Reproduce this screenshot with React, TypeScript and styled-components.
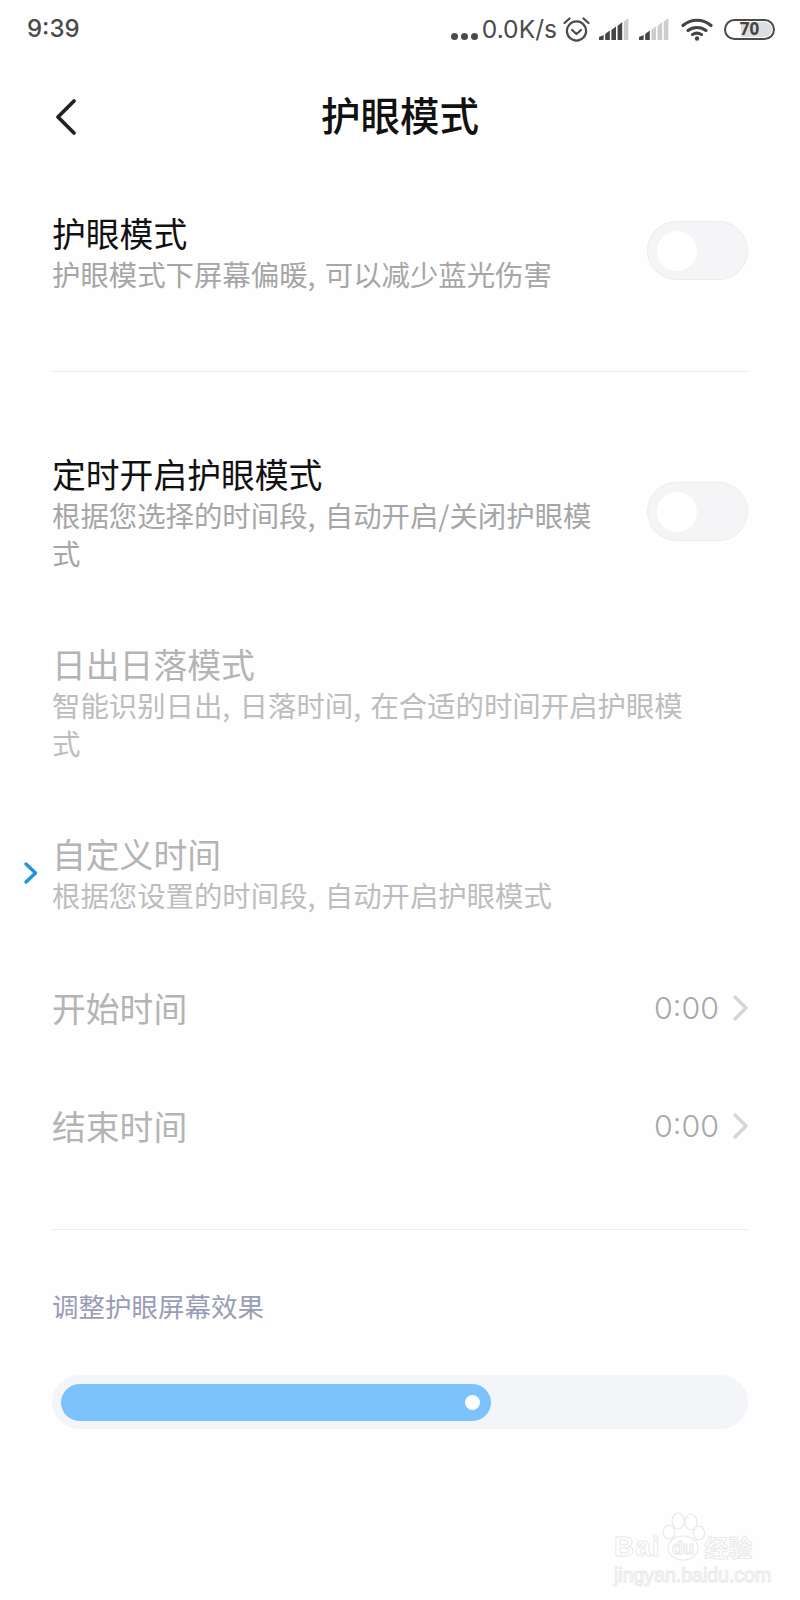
import React from "react";
import styled, { createGlobalStyle } from "styled-components";

const Global = createGlobalStyle`
  html, body { margin: 0; padding: 0; background: #fff; }
  body { font-family: "Noto Sans CJK SC", "Noto Sans", sans-serif; }
`;

const Page = styled.div`
  position: relative;
  width: 800px;
  height: 1600px;
  background: #fefefe;
  overflow: hidden;
`;

const StatusBar = styled.div`
  display: flex;
  align-items: center;
  height: 58px;
  padding: 0 25px 0 27px;
  color: #444;
`;

const Clock = styled.span`
  font: 500 24px/58px Inter, "Noto Sans", sans-serif;
  color: #4a4a4a;
  margin-right: auto;
`;

const Dots = styled.span`
  display: flex;
  gap: 3px;
  align-self: flex-end;
  margin: 0 4px 18px 0;
`;

const Dot = styled.i`
  width: 7px;
  height: 7px;
  border-radius: 50%;
  background: #4a4a4a;
`;

const Speed = styled.span`
  font: 400 24.6px/58px Inter, "Noto Sans", sans-serif;
  color: #4a4a4a;
  margin-right: 6px;
`;

const StatusIcon = styled.svg<{ $gap?: number }>`
  display: block;
  flex: none;
  margin-left: ${(p) => p.$gap ?? 0}px;
`;

const BatteryShell = styled.div`
  box-sizing: border-box;
  position: relative;
  width: 51px;
  height: 21px;
  margin-left: 11px;
  border: 2.5px solid #4a4a4a;
  border-radius: 11px;
  display: flex;
  align-items: center;
  justify-content: center;
  background: #fff;
`;

const BatteryFill = styled.div`
  position: absolute;
  right: 1px;
  top: 1px;
  bottom: 1px;
  width: 66%;
  border-radius: 0 8px 8px 0;
  background: #dedede;
`;

const BatteryLabel = styled.span`
  position: relative;
  font: 700 17px/16px "Noto Sans", sans-serif;
  color: #444;
`;

const NavBar = styled.div`
  position: relative;
  display: flex;
  align-items: center;
  justify-content: center;
  box-sizing: border-box;
  height: 118px;
  padding-bottom: 6px;
`;

const BackIcon = styled.svg`
  position: absolute;
  left: 54px;
  top: 40px;
`;

const NavTitle = styled.h1`
  margin: 0;
  font-size: 39.5px;
  line-height: 46px;
  font-weight: 500;
  color: #111;
`;

const Content = styled.main`
  padding: 0 52px 0 52px;
`;

const Row = styled.section<{ $top: number }>`
  display: flex;
  justify-content: space-between;
  align-items: flex-start;
  margin-top: ${(p) => p.$top}px;
`;

const RowText = styled.div<{ $width?: number }>`
  width: ${(p) => p.$width ?? 560}px;
`;

const RowTitle = styled.div<{ $muted?: boolean }>`
  font-size: 33.8px;
  line-height: 44px;
  color: ${(p) => (p.$muted ? "#b4b4b4" : "#111")};
`;

const RowDesc = styled.div<{ $muted?: boolean }>`
  font-size: 28.4px;
  word-spacing: 3px;
  line-height: 38px;
  color: ${(p) => (p.$muted ? "#bdbdbd" : "#a6a6a6")};
`;

const Toggle = styled.div<{ $offset: number }>`
  box-sizing: border-box;
  flex: none;
  width: 101px;
  height: 59px;
  margin-top: ${(p) => p.$offset}px;
  padding: 9px 0 0 9px;
  border: 1px solid #ececec;
  border-radius: 30px;
  background: #f5f4f6;
`;

const Knob = styled.div`
  width: 40px;
  height: 40px;
  border-radius: 50%;
  background: #fff;
`;

const Divider = styled.hr<{ $top: number }>`
  height: 1px;
  border: 0;
  margin: ${(p) => p.$top}px 0 0;
  background: #ececec;
`;

const SelectedMark = styled.svg`
  position: absolute;
  left: 23px;
  top: 861px;
`;

const TimeRow = styled.div<{ $top: number }>`
  display: flex;
  align-items: center;
  height: 44px;
  margin-top: ${(p) => p.$top}px;
`;

const TimeValue = styled.span`
  margin-left: auto;
  margin-right: 14px;
  font: 300 30.4px/44px Inter, "Noto Sans", sans-serif;
  color: #a8a8a8;
`;

const SectionLabel = styled.div`
  margin-top: 58px;
  font-size: 26.5px;
  line-height: 36px;
  color: #9a9db6;
`;

const SliderTrack = styled.div`
  box-sizing: border-box;
  height: 54px;
  margin-top: 51px;
  padding: 9px;
  border-radius: 27px;
  background: #f3f5f9;
`;

const SliderFill = styled.div<{ $width: number }>`
  position: relative;
  width: ${(p) => p.$width}px;
  height: 37px;
  border-radius: 19px;
  background: #7cc3fd;
`;

const SliderDot = styled.div`
  position: absolute;
  right: 11px;
  top: 11px;
  width: 15px;
  height: 15px;
  border-radius: 50%;
  background: #fff;
`;

const Watermark = styled.div`
  position: absolute;
  left: 614px;
  top: 1512px;
  width: 150px;
  color: #fff;
  -webkit-text-stroke: 1px #e9e9e9;
`;

const WatermarkTop = styled.div`
  display: flex;
  align-items: flex-end;
  height: 50px;
`;

const WatermarkBrand = styled.span`
  font: 700 28px/30px "Liberation Sans", sans-serif;
  letter-spacing: 1px;
`;

const WatermarkCn = styled.span`
  font-size: 24px;
  line-height: 30px;
  font-weight: 700;
`;

const WatermarkUrl = styled.div`
  font: 400 19.5px/24px "Liberation Sans", sans-serif;
  white-space: nowrap;
  margin-top: 1px;
`;

const Signal = ({ active, gap }: { active: number; gap: number }) => {
  const bars = [
    { x: 0, a: 19, b: 17 },
    { x: 6.2, a: 16, b: 12.5 },
    { x: 12.4, a: 12, b: 8.5 },
    { x: 18.6, a: 8, b: 4 },
    { x: 24.8, a: 3.5, b: 0 },
  ];
  return (
    <StatusIcon $gap={gap} width="30" height="22" viewBox="0 0 30 22">
      {bars.map((b, i) => (
        <polygon
          key={b.x}
          points={`${b.x},${b.a} ${b.x + 4.6},${b.b} ${b.x + 4.6},22 ${b.x},22`}
          fill={i < active ? "#444" : "#cdcdcd"}
        />
      ))}
    </StatusIcon>
  );
};

const Chevron = () => (
  <svg width="15" height="26" viewBox="0 0 15 26" fill="none">
    <path d="M2 2 L13 13 L2 24" stroke="#d6d6d6" strokeWidth="3.4" strokeLinecap="round" strokeLinejoin="round" />
  </svg>
);

export default function App() {
  return (
    <Page>
      <Global />
      <StatusBar>
        <Clock>9:39</Clock>
        <Dots>
          <Dot />
          <Dot />
          <Dot />
        </Dots>
        <Speed>0.0K/s</Speed>
        <StatusIcon width="27" height="27" viewBox="0 0 27 27" fill="none" stroke="#4a4a4a" strokeWidth="2.2" strokeLinecap="round" strokeLinejoin="round">
          <circle cx="13.5" cy="15" r="9.6" />
          <path d="M9 14 L13.5 18 L18 14" />
          <path d="M1.5 7 L6.5 2.5 M25.5 7 L20.5 2.5" />
        </StatusIcon>
        <Signal active={4} gap={9} />
        <Signal active={2} gap={10} />
        <StatusIcon $gap={12} width="32" height="23" viewBox="0 0 32 23" fill="none" stroke="#444" strokeWidth="3.2" strokeLinecap="round">
          <path d="M2 7.5 C10 0.5 22 0.5 30 7.5" />
          <path d="M7 12.5 C12 8.5 20 8.5 25 12.5" />
          <path d="M11.5 16.5 C14 15 18 15 20.5 16.5" />
          <circle cx="16" cy="20.5" r="2.2" fill="#444" stroke="none" />
        </StatusIcon>
        <BatteryShell>
          <BatteryFill />
          <BatteryLabel>70</BatteryLabel>
        </BatteryShell>
      </StatusBar>

      <NavBar>
        <BackIcon width="24" height="38" viewBox="0 0 24 38" fill="none">
          <path d="M20 3 L4 19 L20 35" stroke="#222" strokeWidth="3.8" strokeLinecap="round" strokeLinejoin="round" />
        </BackIcon>
        <NavTitle>护眼模式</NavTitle>
      </NavBar>

      <Content>
        <Row $top={35}>
          <RowText $width={560}>
            <RowTitle>护眼模式</RowTitle>
            <RowDesc>护眼模式下屏幕偏暖, 可以减少蓝光伤害</RowDesc>
          </RowText>
          <Toggle $offset={10}>
            <Knob />
          </Toggle>
        </Row>

        <Divider $top={78} />

        <Row $top={80}>
          <RowText $width={545}>
            <RowTitle>定时开启护眼模式</RowTitle>
            <RowDesc>根据您选择的时间段, 自动开启/关闭护眼模式</RowDesc>
          </RowText>
          <Toggle $offset={30}>
            <Knob />
          </Toggle>
        </Row>

        <Row $top={70}>
          <RowText $width={645}>
            <RowTitle $muted>日出日落模式</RowTitle>
            <RowDesc $muted>智能识别日出, 日落时间, 在合适的时间开启护眼模式</RowDesc>
          </RowText>
        </Row>

        <Row $top={70}>
          <RowText $width={640}>
            <RowTitle $muted>自定义时间</RowTitle>
            <RowDesc $muted>根据您设置的时间段, 自动开启护眼模式</RowDesc>
          </RowText>
        </Row>

        <TimeRow $top={72}>
          <RowTitle $muted>开始时间</RowTitle>
          <TimeValue>0:00</TimeValue>
          <Chevron />
        </TimeRow>
        <TimeRow $top={74}>
          <RowTitle $muted>结束时间</RowTitle>
          <TimeValue>0:00</TimeValue>
          <Chevron />
        </TimeRow>

        <Divider $top={81} />

        <SectionLabel>调整护眼屏幕效果</SectionLabel>

        <SliderTrack>
          <SliderFill $width={430}>
            <SliderDot />
          </SliderFill>
        </SliderTrack>
      </Content>

      <SelectedMark width="16" height="24" viewBox="0 0 16 24" fill="none">
        <path d="M3 3 L12.5 12 L3 21" stroke="#1e93e0" strokeWidth="3.4" strokeLinecap="round" strokeLinejoin="round" />
      </SelectedMark>

      <Watermark>
        <WatermarkTop>
          <WatermarkBrand>Bai</WatermarkBrand>
          <svg width="44" height="50" viewBox="0 0 44 50" fill="#fff" stroke="#e9e9e9" strokeWidth="1.2">
            <ellipse cx="22" cy="36" rx="15" ry="12" />
            <ellipse cx="8" cy="20" rx="6" ry="7" />
            <ellipse cx="17" cy="9" rx="6" ry="8" />
            <ellipse cx="30" cy="10" rx="6" ry="8" />
            <ellipse cx="38" cy="21" rx="5.5" ry="7" />
            <text x="22" y="42" textAnchor="middle" fontFamily="Liberation Sans" fontWeight="700" fontSize="18">du</text>
          </svg>
          <WatermarkCn>经验</WatermarkCn>
        </WatermarkTop>
        <WatermarkUrl>jingyan.baidu.com</WatermarkUrl>
      </Watermark>
    </Page>
  );
}
